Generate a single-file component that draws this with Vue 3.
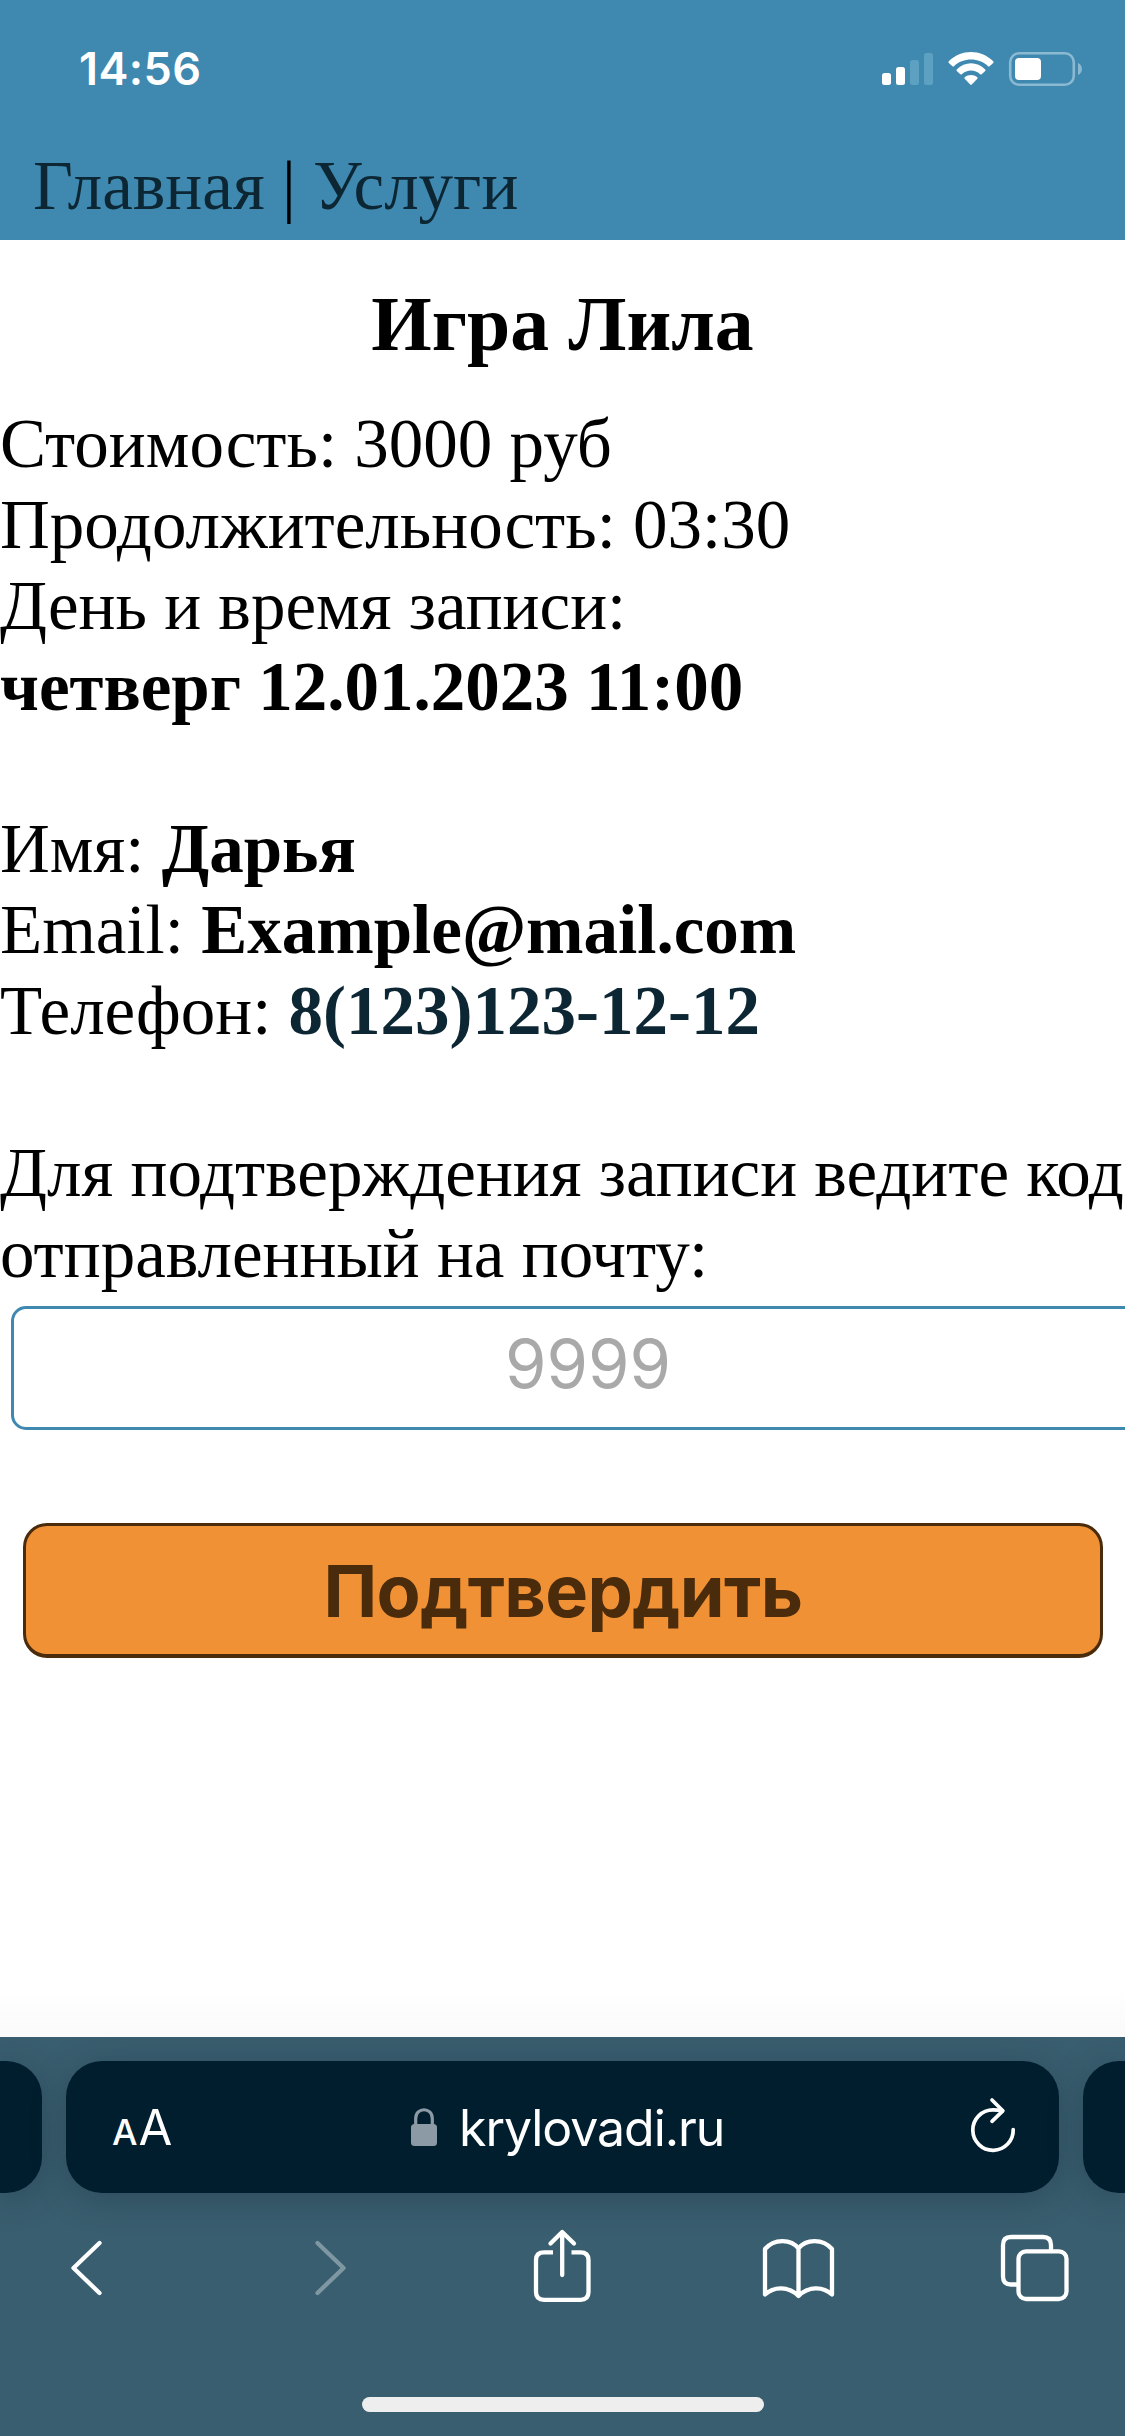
<script setup>
const booking = {
  title: 'Игра Лила',
  price: '3000 руб',
  duration: '03:30',
  date: 'четверг 12.01.2023 11:00',
  name: 'Дарья',
  email: 'Example@mail.com',
  phone: '8(123)123-12-12',
}
</script>

<template>
  <div class="screen">
    <header class="top">
      <div class="status">
        <span class="time">14:56</span>
        <svg class="indicators" width="202" height="36" viewBox="881 51 202 36" fill="#fff">
          <rect x="882" y="73" width="9" height="12" rx="2.5" />
          <rect x="896" y="67" width="9" height="18" rx="2.5" />
          <rect x="910" y="60" width="9" height="25" rx="2.5" fill="#5da1c2" />
          <rect x="924" y="53" width="9" height="32" rx="2.5" fill="#5da1c2" />
          <path d="M948.8 61.2 Q948 62 948.8 62.9 L952.4 66.2 Q953.2 66.9 954 66.2 C963 57.4 979 57.4 988 66.2 Q988.8 66.9 989.6 66.2 L993.2 62.9 Q994 62 993.2 61.2 C980.5 49 961.5 49 948.8 61.2 Z" />
          <path d="M956.8 69.4 Q956 70.2 956.8 71 L960.3 74.2 Q961.1 75 961.9 74.2 C967 69.3 975 69.3 980.1 74.2 Q980.9 75 981.7 74.2 L985.2 71 Q986 70.2 985.2 69.4 C977.3 61.2 964.7 61.2 956.8 69.4 Z" />
          <path d="M964.7 77.3 Q964 78 964.7 78.8 L970.2 84.4 Q971 85.2 971.8 84.4 L977.3 78.8 Q978 78 977.3 77.3 C973.8 74.2 968.2 74.2 964.7 77.3 Z" />
          <rect x="1010.2" y="53.2" width="63.6" height="31.6" rx="9" fill="none" stroke="#8bb9d1" stroke-width="2.6" />
          <rect x="1015" y="58" width="26" height="22" rx="4" />
          <path d="M1078 63 C1083.300 65 1083.300 73 1078 75 Z" fill="#8bb9d1" />
        </svg>
      </div>
      <nav class="nav"><a>Главная</a> | <a>Услуги</a></nav>
    </header>

    <main class="page">
      <h1>{{ booking.title }}</h1>
      <div class="details">
        <div>Стоимость: {{ booking.price }}</div>
        <div>Продолжительность: {{ booking.duration }}</div>
        <div>День и время записи:</div>
        <div><b>{{ booking.date }}</b></div>
        <br />
        <div>Имя: <b>{{ booking.name }}</b></div>
        <div>Email: <b>{{ booking.email }}</b></div>
        <div>Телефон: <b class="phone">{{ booking.phone }}</b></div>
        <br />
        <div>Для подтверждения записи ведите код</div>
        <div>отправленный на почту:</div>
      </div>
      <input class="code" type="text" placeholder="9999" />
      <button class="confirm">Подтвердить</button>
    </main>

    <footer class="browser">
      <div class="tabs">
        <div class="stub left"></div>
        <div class="address">
          <span class="aa"><small>A</small><span>A</span></span>
          <div class="site">
            <svg width="26" height="38" viewBox="0 0 26 38">
              <path d="M4.700 18 V10.500 C4.700 -1.200 21.300 -1.200 21.300 10.500 V18" fill="none" stroke="#8c9aa6" stroke-width="3.200" />
              <rect y="16" width="26" height="22" rx="3.500" fill="#8c9aa6" />
            </svg>
            <span>krylovadi.ru</span>
          </div>
          <svg class="reload" width="48" height="56" viewBox="969 2097 48 56" fill="none" stroke="#fff" stroke-width="3.700" stroke-linecap="round" stroke-linejoin="round">
            <path d="M1013.200 2129.500 A20.200 20.200 0 1 1 993 2109.900 Q998 2109.900 1002.500 2110.800" />
            <path d="M992 2100 L1002.800 2110.800 L992 2121.300" />
          </svg>
        </div>
        <div class="stub right"></div>
      </div>
      <div class="tools">
        <svg class="back" width="35" height="76" viewBox="69 2228 35 76"><path d="M99.500 2243 L73.500 2268 L99.500 2293" /></svg>
        <svg class="forward" width="35" height="76" viewBox="313 2228 35 76"><path d="M317.500 2243 L343.500 2268 L317.500 2293" /></svg>
        <svg class="share" width="60" height="76" viewBox="532 2228 60 76">
          <path d="M553 2252.300 H544 Q536 2252.300 536 2260 V2292 Q536 2299.800 544 2299.800 H580.500 Q588.500 2299.800 588.500 2292 V2260 Q588.500 2252.300 580.500 2252.300 H571.500" stroke-linecap="butt" />
          <path d="M562.200 2275 V2232.500 M550.500 2243.500 L562.200 2232 L574 2243.500" />
        </svg>
        <svg class="book" width="75" height="76" viewBox="761 2228 75 76">
          <path d="M798.500 2248.500 C791 2238.500 774 2238.500 765 2249 V2294.500 C774 2286 789 2286 798.500 2296 C808 2286 823 2286 832 2294.500 V2249 C823 2238.500 806 2238.500 798.500 2248.500 V2296" />
        </svg>
        <svg width="71" height="76" viewBox="999 2228 71 76">
          <path d="M1018 2284.500 H1011 Q1003 2284.500 1003 2276.500 V2245 Q1003 2237 1011 2237 H1043 Q1051 2237 1051 2245 V2251" stroke-linecap="butt" />
          <rect x="1018.500" y="2251.300" width="48" height="47.700" rx="7.500" />
        </svg>
      </div>
      <div class="home"></div>
    </footer>
  </div>
</template>

<style>
body {
  margin: 0;
}
</style>

<style scoped>
.screen {
  width: 1125px;
  height: 2436px;
  overflow: hidden;
  display: flex;
  flex-direction: column;
  background: #fff;
  color: #000;
  font: 69px/81px 'Liberation Serif', serif;
}
.top {
  flex: none;
  height: 240px;
  background: #3f88b0;
}
.status {
  height: 146px;
  padding: 0 42px 0 79px;
  display: flex;
  justify-content: space-between;
}
.time {
  margin-top: 42px;
  font: 600 45px/54px Inter, sans-serif;
  letter-spacing: 0.4px;
  color: #fff;
}
.indicators {
  margin-top: 51px;
}
.nav {
  padding-left: 33px;
  white-space: nowrap;
}
.nav a,
.phone {
  color: #0c2733;
}
.page {
  flex: none;
  height: 1797px;
  display: flex;
  flex-direction: column;
  background: linear-gradient(#fff 1750px, #fafafa);
}
h1 {
  margin: 39px 0 35px;
  font-size: 77.7px;
  line-height: 90px;
  text-align: center;
}
.details {
  white-space: nowrap;
}
.code {
  box-sizing: border-box;
  flex: none;
  width: 1154px;
  height: 124px;
  margin: 11px 0 0 11px;
  padding: 0 0 9px;
  border: 3px solid #3f88b0;
  border-radius: 15px;
  background: #fff;
  text-align: center;
  font: 67px Inter, sans-serif;
}
.code::placeholder {
  color: #a9a9a9;
  opacity: 1;
}
.confirm {
  box-sizing: border-box;
  flex: none;
  width: 1080px;
  height: 135px;
  margin: 93px 0 0 23px;
  padding: 0;
  border: 3px solid #4a2b0b;
  border-bottom-width: 4px;
  border-radius: 24px;
  background: #f09136;
  color: #4a2b0b;
  font: 700 72px Inter, sans-serif;
  letter-spacing: -0.6px;
}
.browser {
  flex: none;
  height: 399px;
  display: flex;
  flex-direction: column;
  background: #395e6f;
  overflow: hidden;
}
.tabs {
  display: flex;
  gap: 24px;
  margin-top: 24px;
}
.stub,
.address {
  flex: none;
  height: 132px;
  box-sizing: border-box;
  background: #001e2e;
  box-shadow: 0 6px 32px rgba(30, 50, 65, 0.4);
}
.stub {
  width: 42px;
}
.left {
  border-radius: 0 36px 36px 0;
}
.right {
  border-radius: 36px 0 0 36px;
}
.address {
  width: 993px;
  padding: 0 42px 0 46px;
  border-radius: 36px;
  display: flex;
  color: #fff;
  font: 50px/60px Inter, sans-serif;
}
.aa {
  flex: none;
  margin-top: 37px;
  width: 62px;
  font-size: 49px;
  letter-spacing: -1px;
  white-space: nowrap;
}
.aa small {
  font-size: 36px;
  font-weight: 500;
  margin-right: 2px;
}
.site {
  display: flex;
  gap: 22px;
  margin: 37px 0 0 237px;
  letter-spacing: -1.05px;
}
.site svg {
  margin-top: 10px;
}
.reload {
  margin: 36px 0 0 auto;
}
.tools {
  height: 76px;
  margin-top: 35px;
  padding-left: 69px;
  display: flex;
  fill: none;
  stroke: #fff;
  stroke-width: 4.3;
  stroke-linecap: round;
  stroke-linejoin: round;
}
.back {
  margin-right: 209px;
}
.forward {
  margin-right: 184px;
  stroke: #7f97a3;
}
.share {
  margin-right: 169px;
}
.book {
  margin-right: 163px;
}
.home {
  width: 402px;
  height: 15px;
  margin: 93px auto 0;
  border-radius: 8px;
  background: #eee;
}
</style>
